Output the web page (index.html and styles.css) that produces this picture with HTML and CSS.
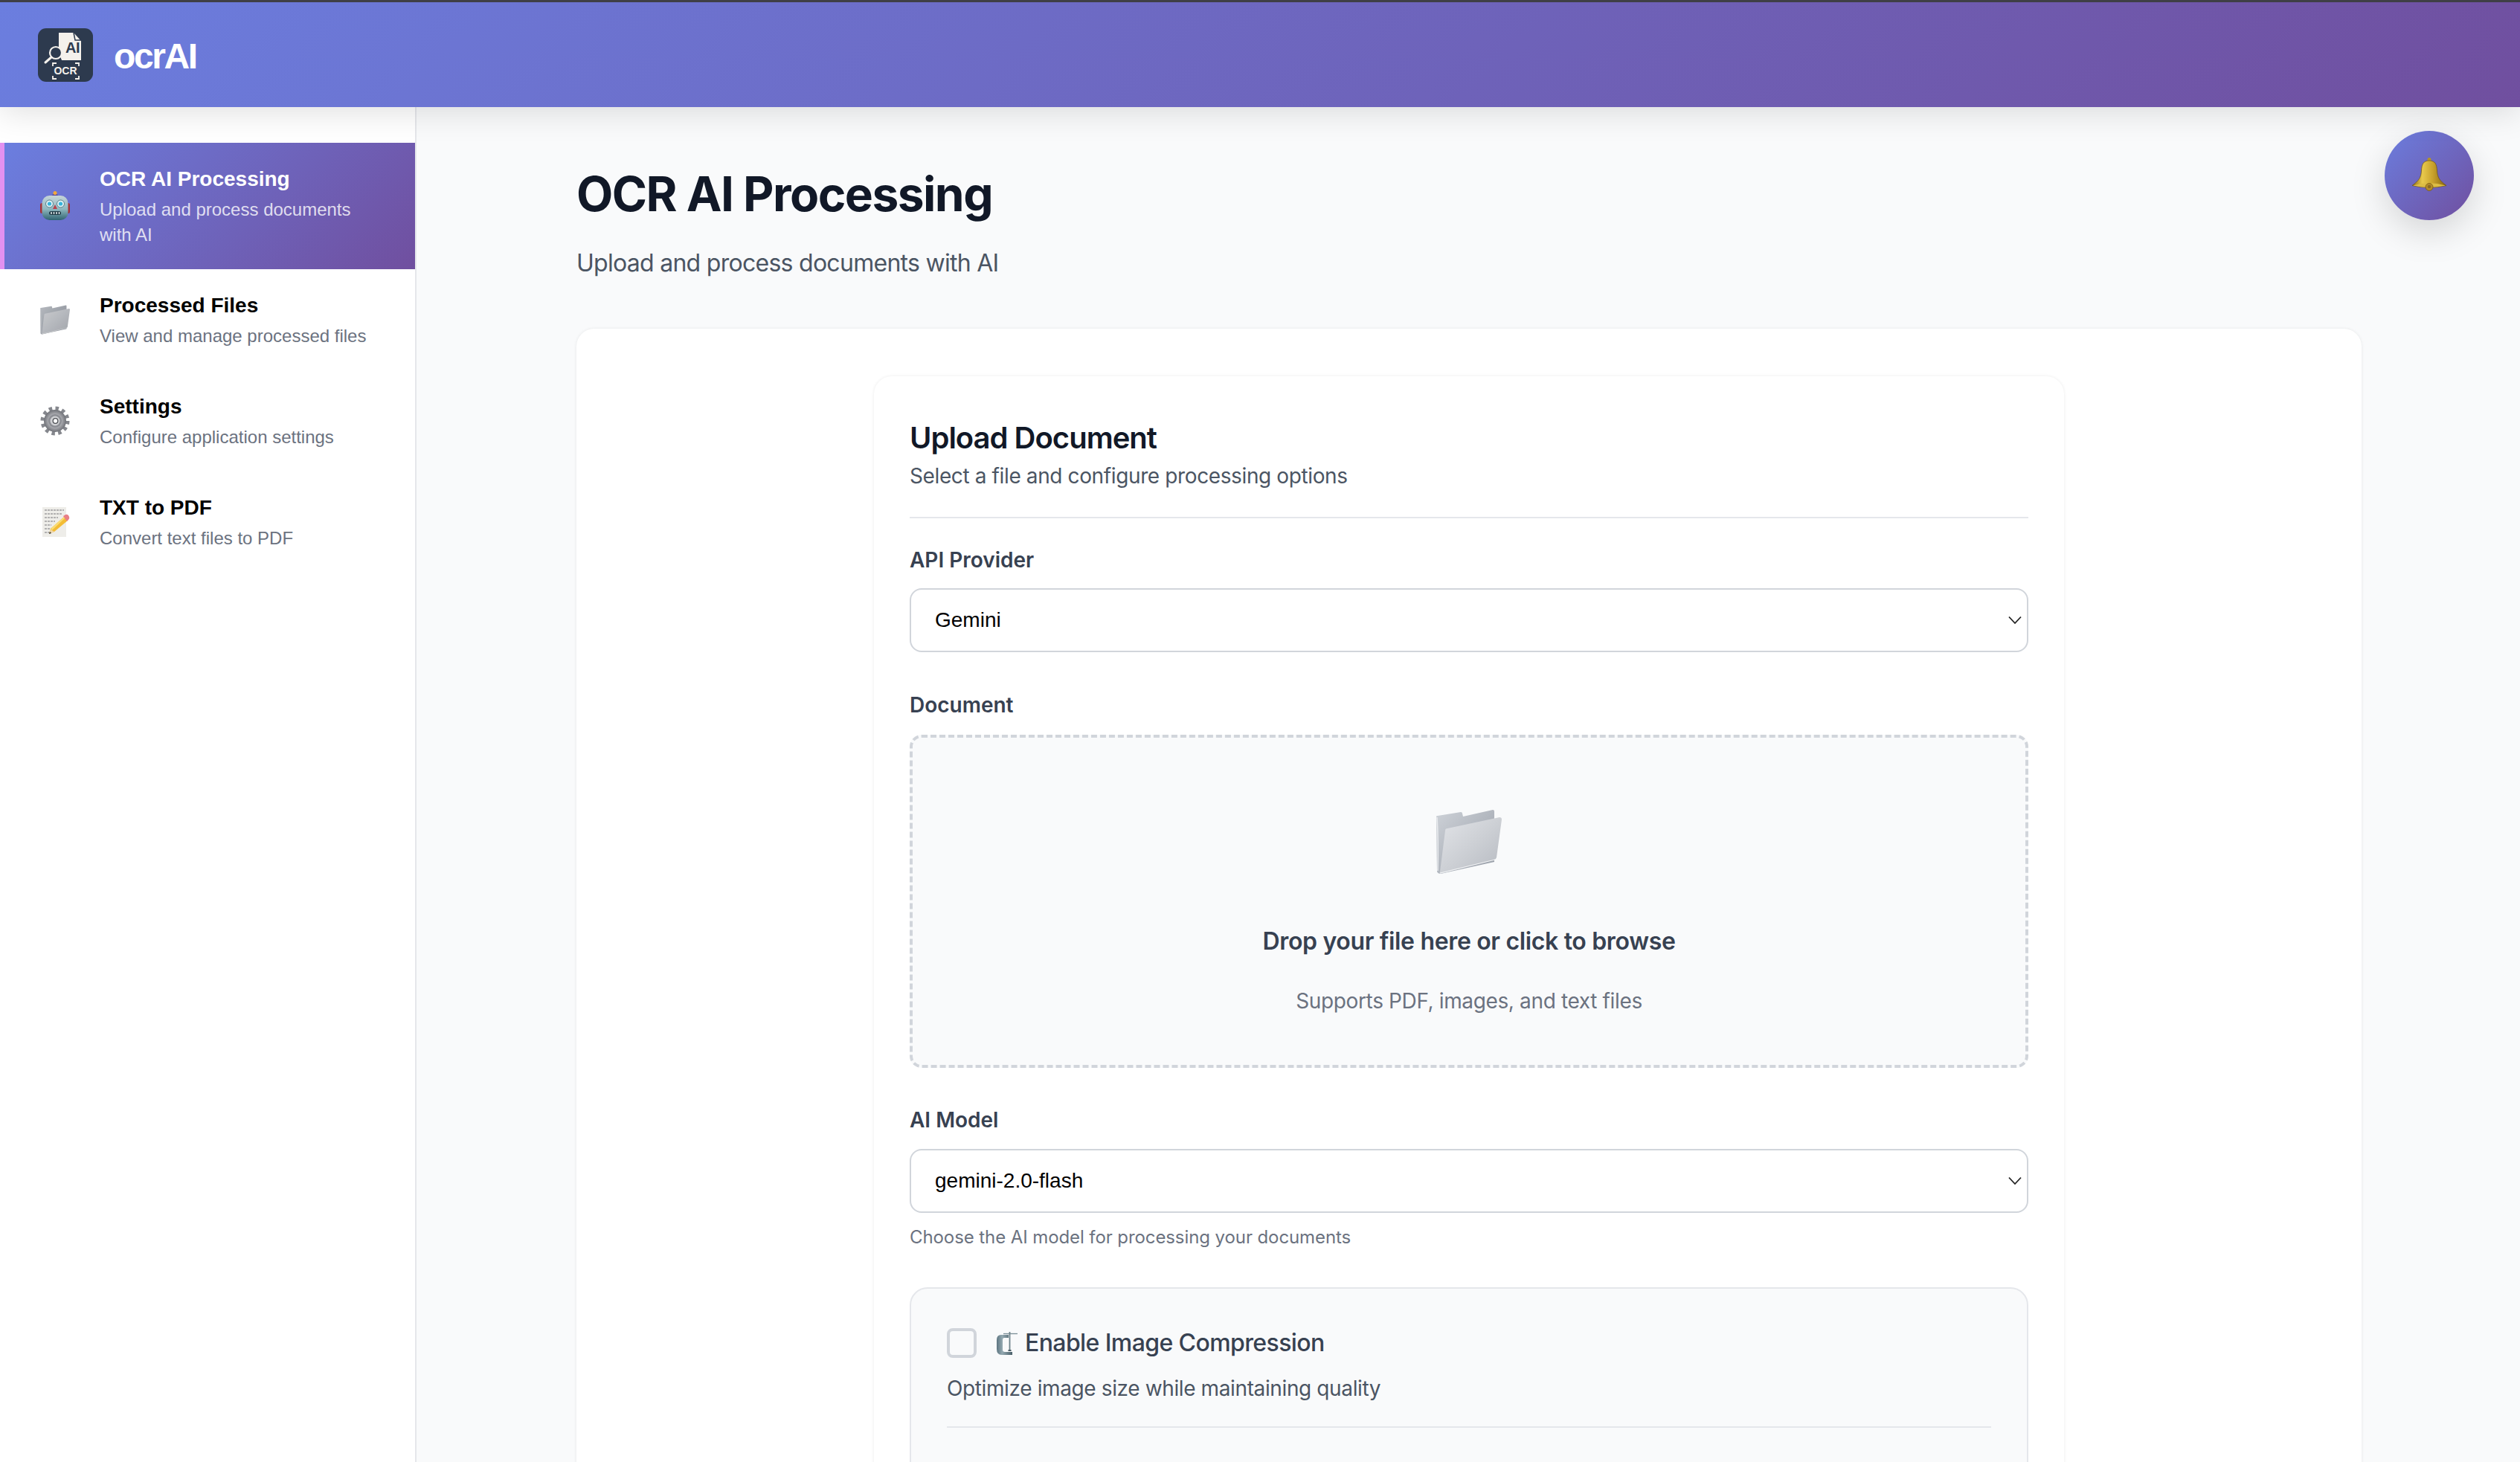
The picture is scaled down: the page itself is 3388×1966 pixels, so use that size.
FILE: index.html
```html
<!DOCTYPE html>
<html lang="en">
<head>
<meta charset="utf-8">
<title>ocrAI</title>
<link rel="stylesheet" href="styles.css">
</head>
<body>
<svg class="defs" width="0" height="0" aria-hidden="true">
  <defs>
    <linearGradient id="fFront" x1="0" y1="0" x2="1" y2="1"><stop offset="0" stop-color="#e2e4e8"/><stop offset=".5" stop-color="#cdd0d5"/><stop offset="1" stop-color="#b6bac1"/></linearGradient>
    <linearGradient id="fBack" x1="0" y1="0" x2="1" y2="1"><stop offset="0" stop-color="#ced2d8"/><stop offset="1" stop-color="#979da7"/></linearGradient>
    <symbol id="folder" viewBox="0 0 88 86">
      <path d="M0 9Q0 8 2 8L33 3Q35 3 35 5L36 9 76 0Q78 0 78 2V70L6 86Q2 86 1 83Z" fill="url(#fBack)"/>
      <path d="M1 10Q3 40 2 82" stroke="#e9ebee" stroke-width="1.5" fill="none"/>
      <path d="M12 28Q12 25 15 25L85 10Q88 10 88 13L81 64Q80 67 78 67L6 86Q4 86 5 83Z" fill="url(#fFront)"/>
      <path d="M5 85L79 67" stroke="#f3f4f6" stroke-width="1.2" fill="none"/>
    </symbol>
    <linearGradient id="rHead" x1="0" y1="0" x2="0" y2="1"><stop offset="0" stop-color="#c6d4d8"/><stop offset=".55" stop-color="#8fb8c0"/><stop offset="1" stop-color="#2f6370"/></linearGradient>
    <radialGradient id="gGear" cx=".5" cy=".5" r=".5"><stop offset="0" stop-color="#dcdde0"/><stop offset=".6" stop-color="#a9aaaf"/><stop offset="1" stop-color="#6f7177"/></radialGradient>
    <linearGradient id="gBell" x1="0" y1="0" x2="1" y2="0"><stop offset="0" stop-color="#8f6c14"/><stop offset=".3" stop-color="#e8c94c"/><stop offset=".6" stop-color="#c9a22c"/><stop offset="1" stop-color="#86640f"/></linearGradient>
    <linearGradient id="gClamp" x1="0" y1="0" x2="1" y2="0"><stop offset="0" stop-color="#5c7480"/><stop offset=".35" stop-color="#93a8b0"/><stop offset="1" stop-color="#4a5f69"/></linearGradient>
  </defs>
</svg>

<div class="topline"></div>
<header class="appbar">
  <svg class="logo" viewBox="0 0 74 72" role="img" aria-label="ocrAI logo">
    <rect width="74" height="72" rx="11" fill="#2d3a4e"/>
    <path d="M28 6H48L58 17V43H32L28 33Z" fill="#f4f1ec"/>
    <path d="M48 6L50 16H58" stroke="#2d3a4e" stroke-width="1.500" fill="none"/>
    <text x="37" y="33" class="logo-ai">AI</text>
    <circle cx="24" cy="33" r="8" fill="#2d3a4e" stroke="#f4f1ec" stroke-width="2.200"/>
    <path d="M18 39L10 46" stroke="#f4f1ec" stroke-width="3" stroke-linecap="round"/>
    <path d="M20 51V47H25M50 47H55V51M20 64V68H25M50 68H55V64" stroke="#f4f1ec" stroke-width="1.800" fill="none"/>
    <text x="37" y="62" class="logo-ocr">OCR</text>
  </svg>
  <span class="brand">ocrAI</span>
</header>

<div class="layout">
  <nav class="sidebar">
    <a class="nav-item active">
      <svg class="nav-icon" viewBox="0 0 40 40">
        <path d="M16 7Q16 3.500 20 3.500T24 7V8H16Z" fill="#5b4a9a"/>
        <circle cx="20" cy="2.500" r="2.500" fill="#f2a93b"/>
        <rect x="0" y="16" width="5" height="14" rx="2.500" fill="#a5333a"/>
        <rect x="35" y="16" width="5" height="14" rx="2.500" fill="#a5333a"/>
        <rect x="2.500" y="6" width="35" height="33" rx="10" fill="url(#rHead)"/>
        <circle cx="12.500" cy="17" r="5" fill="#dff1f4" stroke="#5a7f8a" stroke-width="1"/>
        <circle cx="27.500" cy="17" r="5" fill="#dff1f4" stroke="#5a7f8a" stroke-width="1"/>
        <circle cx="12.500" cy="17" r="2.600" fill="#36b4dc"/>
        <circle cx="27.500" cy="17" r="2.600" fill="#36b4dc"/>
        <path d="M20 18L23 24H17Z" fill="#b8404a"/>
        <rect x="12" y="27" width="16" height="5" rx="2.500" fill="#1f3a45"/>
        <path d="M15 28V31M18.500 28V31M22 28V31M25.500 28V31" stroke="#e8eef0" stroke-width="1.500"/>
      </svg>
      <span class="nav-text">
        <span class="nav-title">OCR AI Processing</span>
        <span class="nav-sub">Upload and process documents with AI</span>
      </span>
    </a>
    <a class="nav-item">
      <svg class="nav-icon nav-folder"><use href="#folder"/></svg>
      <span class="nav-text">
        <span class="nav-title">Processed Files</span>
        <span class="nav-sub">View and manage processed files</span>
      </span>
    </a>
    <a class="nav-item">
      <svg class="nav-icon" viewBox="0 0 40 40">
        <circle cx="20" cy="20" r="16.500" fill="none" stroke="#85878d" stroke-width="6" stroke-dasharray="4.320 4.320"/>
        <circle cx="20" cy="20" r="15" fill="url(#gGear)"/>
        <circle cx="20" cy="20" r="9" fill="#8c8e94"/>
        <circle cx="20" cy="20" r="6.500" fill="#cfd0d3"/>
        <circle cx="20.500" cy="20" r="3.300" fill="#fff" stroke="#4d4f54" stroke-width="1.300"/>
      </svg>
      <span class="nav-text">
        <span class="nav-title">Settings</span>
        <span class="nav-sub">Configure application settings</span>
      </span>
    </a>
    <a class="nav-item">
      <svg class="nav-icon" viewBox="0 0 40 40">
        <rect x="3" y="0" width="32" height="40" fill="#eeede9"/>
        <path d="M6 4H32M6 9H30M6 14H24M6 19H20M6 24H15M6 29H16M6 34H14" stroke="#77777a" stroke-width="1.100" stroke-dasharray="3 1"/>
        <path d="M12 36L14 29 32 13 37 18 19 33Z" fill="#f3bc35"/>
        <path d="M14 29L32 13 33.500 14.500 16 31Z" fill="#f9dc74"/>
        <path d="M31 12L34 10Q36 9 38 11L39 13Q40 15 38 17L36 19Z" fill="#e87f86"/>
        <path d="M12 36L14 30 19 33Z" fill="#eed7ad"/>
        <path d="M12 36L13 33 15 35Z" fill="#333"/>
      </svg>
      <span class="nav-text">
        <span class="nav-title">TXT to PDF</span>
        <span class="nav-sub">Convert text files to PDF</span>
      </span>
    </a>
  </nav>

  <main class="main">
    <button class="bell-btn" type="button" aria-label="Notifications">
      <svg class="bell" viewBox="0 0 46 45">
        <circle cx="23" cy="2.500" r="2.500" fill="#b4932a"/>
        <path d="M23 4C15 4 13 9 12.500 17 12 27 9 31 0 37.500Q23 43 46 37.500C37 31 34 27 33.500 17 33 9 31 4 23 4Z" fill="url(#gBell)" stroke="#6f5210" stroke-width=".7"/>
        <path d="M1 37.500Q23 31 45 37.500 23 42 1 37.500Z" fill="#dcbc44"/>
        <circle cx="23" cy="39.500" r="5" fill="#b58a2a" stroke="#7a5a10" stroke-width=".8"/>
        <circle cx="23" cy="39" r="2.200" fill="#8a6a20"/>
      </svg>
    </button>

    <div class="content">
      <h1 class="page-title">OCR AI Processing</h1>
      <p class="page-sub">Upload and process documents with AI</p>

      <section class="panel">
        <div class="upload-card">
          <div class="card-head">
            <h2 class="card-title">Upload Document</h2>
            <p class="card-sub">Select a file and configure processing options</p>
          </div>

          <label class="field-label first">API Provider</label>
          <div class="select-box">
            <span class="select-value">Gemini</span>
            <svg class="chevron" viewBox="0 0 18 12"><path d="M1 1.500L9 10 17 1.500" fill="none" stroke="#222" stroke-width="1.800"/></svg>
          </div>

          <label class="field-label doc">Document</label>
          <div class="dropzone">
            <svg class="drop-icon"><use href="#folder"/></svg>
            <p class="drop-title">Drop your file here or click to browse</p>
            <p class="drop-sub">Supports PDF, images, and text files</p>
          </div>

          <label class="field-label model">AI Model</label>
          <div class="select-box">
            <span class="select-value">gemini-2.0-flash</span>
            <svg class="chevron" viewBox="0 0 18 12"><path d="M1 1.500L9 10 17 1.500" fill="none" stroke="#222" stroke-width="1.800"/></svg>
          </div>
          <p class="hint">Choose the AI model for processing your documents</p>

          <div class="compress">
            <div class="compress-row">
              <span class="checkbox"></span>
              <svg class="clamp" viewBox="0 0 28 31">
                <path d="M16 4H6Q0 4 0 11V23Q0 31 7 31H21V27H11Q8 27 8 24V11Q8 8 10 8H16Z" fill="url(#gClamp)"/>
                <path d="M9 2.500H28" stroke="#7b8f97" stroke-width="1.300"/>
                <path d="M17.500 0V24" stroke="#6f838b" stroke-width="1.800"/>
                <path d="M15.500 25H19.500" stroke="#4b5d65" stroke-width="2"/>
              </svg>
              <span class="compress-label">Enable Image Compression</span>
            </div>
            <p class="compress-sub">Optimize image size while maintaining quality</p>
            <div class="compress-rule"></div>
          </div>
        </div>
      </section>
    </div>
  </main>
</div>
</body>
</html>
```

FILE: styles.css
```css
* { box-sizing: border-box; }
html, body { margin: 0; height: 100%; overflow: hidden; }
body {
  display: flex;
  flex-direction: column;
  background: #f9fafb;
  font-family: Inter, "Liberation Sans", sans-serif;
  color: #111827;
}
.defs { position: absolute; }
p, h1, h2 { margin: 0; }

.topline { height: 3px; background: #3f3f46; flex: none; position: relative; z-index: 3; }
.appbar {
  flex: none;
  height: 141px;
  display: flex;
  align-items: center;
  gap: 28px;
  padding: 0 0 0 51px;
  background: linear-gradient(135deg, #6b7edf 0%, #704f9f 100%);
  box-shadow: 0 8px 40px rgba(0, 0, 0, .12);
  position: relative;
  z-index: 2;
}
.logo { width: 74px; height: 72px; }
.logo-ai { font: 700 20px "Liberation Sans", sans-serif; letter-spacing: -.5px; fill: #2d3a4e; }
.logo-ocr { font: 700 14px "Liberation Sans", sans-serif; fill: #f4f1ec; text-anchor: middle; }
.brand {
  margin-top: 3px;
  font: 700 48px "Liberation Sans", sans-serif;
  letter-spacing: -2.400px;
  color: #fff;
}

.layout { flex: 1; display: flex; min-height: 0; }
.sidebar {
  flex: none;
  width: 560px;
  padding-top: 48px;
  background: #fff;
  border-right: 2px solid #e5e7eb;
  font-family: "Liberation Sans", sans-serif;
}
.nav-item {
  display: flex;
  align-items: center;
  gap: 40px;
  padding: 29px 60px 29px 54px;
  color: #000;
}
.nav-item.active {
  padding-left: 48px;
  border-left: 6px solid #e291f0;
  background: linear-gradient(135deg, #6b7edf 0%, #704f9f 100%);
  color: #fff;
}
.nav-icon { flex: none; width: 40px; height: 40px; }
.nav-folder { filter: brightness(.86) contrast(1.1); }
.nav-text { display: flex; flex-direction: column; gap: 5px; }
.nav-title { font-size: 28px; line-height: 39px; font-weight: 700; }
.nav-sub { font-size: 24px; line-height: 34px; color: #6b7280; }
.active .nav-sub { color: rgba(255, 255, 255, .8); }

.main { flex: 1; position: relative; min-width: 0; padding-left: 215px; }
.bell-btn {
  position: absolute;
  top: 32px;
  right: 62px;
  width: 120px;
  height: 120px;
  border: 0;
  border-radius: 50%;
  padding: 0 0 3px;
  display: flex;
  align-items: center;
  justify-content: center;
  background: linear-gradient(135deg, #6b7edf 0%, #704f9f 100%);
  box-shadow: 0 16px 48px rgba(0, 0, 0, .15);
}
.bell { width: 46px; height: 45px; }

.content { width: 2400px; padding-top: 78px; }
.page-title { font-size: 64px; line-height: 77px; font-weight: 700; letter-spacing: -1.530px; color: #111827; }
.page-sub { margin-top: 31px; font-size: 32px; line-height: 48px; letter-spacing: -.72px; color: #4b5563; }

.panel {
  margin-top: 64px;
  padding: 64px 0 0 400px;
  height: 1600px;
  background: #fff;
  border-radius: 24px;
  box-shadow: 0 0 4px rgba(0, 0, 0, .08);
}
.upload-card {
  width: 1600px;
  padding: 48px;
  background: #fff;
  border-radius: 24px;
  box-shadow: 0 0 4px rgba(0, 0, 0, .08);
}
.card-head { padding: 11px 0 34px; border-bottom: 2px solid #e5e7eb; }
.card-title { font-size: 40px; line-height: 48px; font-weight: 600; letter-spacing: -1px; color: #111827; }
.card-sub { margin-top: 6px; font-size: 28px; line-height: 42px; letter-spacing: -.38px; color: #4b5563; }

.field-label { display: block; font-size: 28px; line-height: 40px; font-weight: 600; color: #374151; }
.field-label.first { margin-top: 36px; margin-bottom: 18px; }
.field-label.doc { margin-top: 51px; margin-bottom: 20px; }
.field-label.model { margin-top: 50px; margin-bottom: 19px; }

.select-box {
  height: 86px;
  display: flex;
  align-items: center;
  justify-content: space-between;
  padding: 0 7px 0 32px;
  background: #fff;
  border: 2px solid #d1d5db;
  border-radius: 16px;
}
.select-value { font: 28px "Liberation Sans", sans-serif; color: #000; }
.chevron { width: 18px; height: 12px; }

.dropzone {
  height: 448px;
  display: flex;
  flex-direction: column;
  align-items: center;
  padding-top: 97px;
  background: #f9fafb;
  border: 4px dashed #d1d5db;
  border-radius: 16px;
}
.drop-icon { width: 88px; height: 86px; }
.drop-title { margin-top: 67px; font-size: 32px; line-height: 48px; font-weight: 600; letter-spacing: -.34px; color: #374151; }
.drop-sub { margin-top: 35px; font-size: 28px; line-height: 42px; letter-spacing: -.36px; color: #6b7280; }

.hint { margin-top: 15px; font-size: 24px; line-height: 36px; letter-spacing: -.09px; color: #6b7280; }

.compress {
  margin-top: 49px;
  height: 400px;
  padding: 49px 48px;
  background: #f9fafb;
  border: 2px solid #e5e7eb;
  border-radius: 24px;
}
.compress-row { display: flex; align-items: center; height: 48px; }
.checkbox { width: 40px; height: 40px; border: 4px solid #d1d5db; border-radius: 8px; }
.clamp { width: 28px; height: 31px; margin-left: 27px; }
.compress-label { margin-left: 10px; font-size: 32px; line-height: 48px; font-weight: 500; letter-spacing: -.6px; color: #374151; }
.compress-sub { margin-top: 16px; font-size: 28px; line-height: 42px; letter-spacing: -.38px; color: #4b5563; }
.compress-rule { margin-top: 30px; height: 2px; background: #e5e7eb; }
```
